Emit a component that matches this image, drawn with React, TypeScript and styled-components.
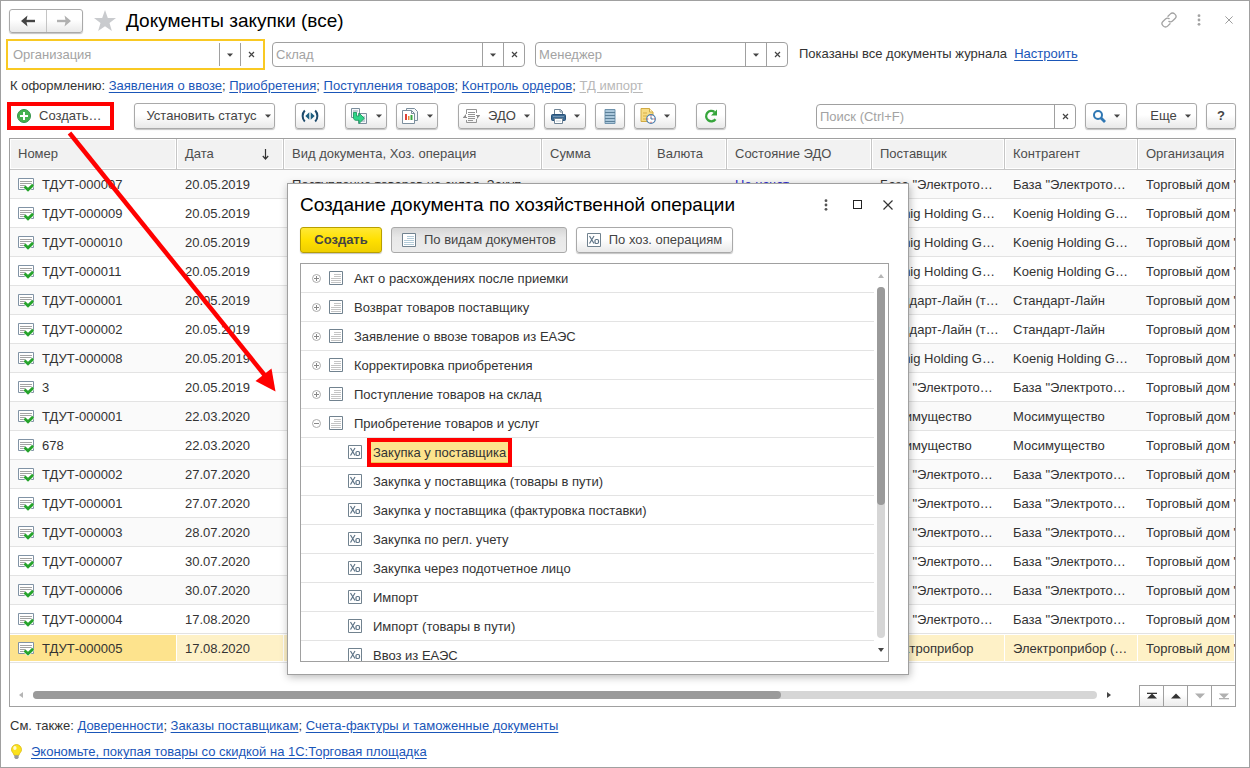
import React from "react";
import styled, { createGlobalStyle, css } from "styled-components";

const GlobalStyle = createGlobalStyle`
  *, *::before, *::after { box-sizing: border-box; }
  body {
    margin: 0;
    background: #fff;
    color: #333;
    font: 13px/16px "Liberation Sans", Arial, sans-serif;
  }
  button, input { font: inherit; color: inherit; }
`;

const Page = styled.main`
  position: relative;
  display: flex;
  flex-direction: column;
  min-height: 100vh;
  padding: 7px 13px 7px 8px;
  border: 1px solid #a0a0a0;
`;

/* ---------- shared controls ---------- */

const raised = css`
  border: 1px solid #a9a9a9;
  border-radius: 3px;
  background: linear-gradient(#fff 0%, #fff 45%, #e9e9e9 100%);
  box-shadow: 0 1px 1px #c4c4c4;
`;

const Button = styled.button<{ $width?: number; $tone?: "yellow" | "pressed"; $menu?: boolean }>`
  ${raised}
  display: inline-flex;
  flex: none;
  align-items: center;
  justify-content: center;
  gap: 8px;
  width: ${(p) => (p.$width ? `${p.$width}px` : "auto")};
  height: 26px;
  padding: ${(p) => (p.$menu ? "0 0 0 8px" : "0")};
  color: #444;
  white-space: nowrap;
  ${(p) =>
    p.$tone === "yellow" &&
    css`
      border-color: #b89f00;
      background: linear-gradient(#ffe836 0%, #ffe000 50%, #efcf00 100%);
      font-weight: bold;
    `}
  ${(p) =>
    p.$tone === "pressed" &&
    css`
      background: linear-gradient(#d6d6d6 0%, #e8e8e8 40%, #ececec 100%);
      box-shadow: none;
    `}
`;

const PlainButton = styled.button`
  display: inline-flex;
  flex: none;
  align-items: center;
  justify-content: center;
  width: 20px;
  height: 20px;
  padding: 0;
  border: 0;
  background: none;
`;

const Link = styled.a<{ $muted?: boolean }>`
  color: ${(p) => (p.$muted ? "#b8b8b8" : "#1a56b8")};
  text-decoration: underline;
  text-underline-offset: 2px;
`;

/* ---------- header ---------- */

const Header = styled.header`
  display: flex;
  align-items: center;
  height: 25px;
`;

const History = styled.div`
  ${raised}
  display: flex;
  width: 74px;
  height: 24px;
`;

const HistoryButton = styled.button`
  display: flex;
  flex: 1;
  align-items: center;
  justify-content: center;
  padding: 0;
  border: 0;
  background: none;
  & + & { border-left: 1px solid #c4c4c4; }
`;

const Favourite = styled(PlainButton)`
  width: 24px;
  height: 24px;
  margin: 0 9px 0 10px;
`;

const Title = styled.h1`
  margin: 0;
  color: #000;
  font-size: 19px;
  font-weight: normal;
  line-height: 24px;
`;

const WindowTools = styled.div`
  display: flex;
  gap: 10px;
  margin-left: auto;
  margin-right: -3px;
  padding-bottom: 2px;
`;

/* ---------- filters ---------- */

const Filters = styled.div`
  display: flex;
  align-items: flex-start;
  gap: 10px;
  height: 26px;
  margin-top: 9px;
  line-height: 24px;
`;

const Field = styled.div<{ $width: number; $focused?: boolean }>`
  display: flex;
  flex: none;
  width: ${(p) => p.$width}px;
  height: 25px;
  border: 1px solid #a0a0a0;
  border-radius: 4px;
  background: #fff;
  ${(p) =>
    p.$focused &&
    css`
      border-color: transparent;
      border-radius: 0;
      outline: 2px solid #f9c923;
      outline-offset: 1px;
    `}
`;

const FieldInput = styled.input`
  flex: 1;
  min-width: 0;
  padding: 0 3px;
  border: 0;
  outline: 0;
  background: none;
  &::placeholder { color: #a3a3a3; opacity: 1; }
`;

const FieldButton = styled.button`
  display: flex;
  flex: none;
  align-items: center;
  justify-content: center;
  width: 21px;
  padding: 0;
  border: 0;
  border-left: 1px solid #a0a0a0;
  background: none;
`;

const FilterNote = styled.span`
  padding-left: 1px;
  white-space: nowrap;
`;

const LinkLine = styled.nav`
  padding-left: 1px;
  white-space: nowrap;
`;

const DueLine = styled(LinkLine)`
  margin-top: 10px;
`;

/* ---------- toolbar ---------- */

const Toolbar = styled.div`
  display: flex;
  gap: 20px;
  margin: 9px 0;
`;

const Group = styled.div<{ $end?: boolean }>`
  display: flex;
  align-items: flex-end;
  gap: 9px;
  margin-left: ${(p) => (p.$end ? "auto" : "0")};
`;

const CreateSlot = styled.div`
  position: relative;
  width: 105px;
  padding-left: 7px;
`;

const CreateButton = styled(Button)`
  width: 94px;
  justify-content: flex-start;
  border-color: transparent;
  background: none;
  box-shadow: none;
`;

const ToolbarMark = styled.span`
  position: absolute;
  inset: -1px 0 -1px -2px;
  border: 4px solid #f00;
  pointer-events: none;
`;

/* ---------- document list ---------- */

const ListPanel = styled.section`
  display: flex;
  flex: 1;
  flex-direction: column;
  border: 1px solid #a0a0a0;
`;

const Table = styled.table`
  width: 100%;
  border-collapse: separate;
  border-spacing: 0;
  table-layout: fixed;
`;

const HeadCell = styled.th`
  height: 31px;
  padding: 0 8px;
  border-right: 1px solid #c6c6c6;
  border-bottom: 1px solid #c6c6c6;
  background: #f2f2f2;
  box-shadow: inset 1px 1px #fff, inset -1px -1px #fff;
  color: #4d4d4d;
  font-weight: normal;
  text-align: left;
  white-space: nowrap;
  &:last-child { border-right: 0; }
`;

const HeadLabel = styled.span`
  display: flex;
  align-items: center;
  justify-content: space-between;
  padding-right: 6px;
`;

const Row = styled.tr<{ $selected: boolean }>`
  background: #fff;
  &:nth-child(odd) { background: #fafafa; }
  && {
    ${(p) => p.$selected && "background: #fef1c7;"}
  }
`;

const Cell = styled.td<{ $selected: boolean; $current?: boolean }>`
  height: 29px;
  padding: 1px 0 0 8px;
  border-bottom: 1px solid #e3e3e3;
  overflow: hidden;
  white-space: nowrap;
  ${(p) => p.$current && "background: #fde38d;"}
  ${(p) => p.$selected && "box-shadow: inset 0 1px #fff, inset -1px -1px #fff;"}
`;

const NumberLabel = styled.span`
  display: flex;
  align-items: center;
  gap: 8px;
`;

const State = styled.span`
  color: #2d2dd0;
`;

const ListFooter = styled.div`
  display: flex;
  align-items: flex-end;
  margin-top: auto;
  padding-left: 4px;
`;

const HScroll = styled.div`
  display: flex;
  flex: 1;
  align-items: center;
  gap: 5px;
  height: 22px;
  margin-right: 23px;
`;

const HTrack = styled.div`
  flex: 1;
  height: 8px;
  border-radius: 4px;
  background: #d6d6d6;
`;

const HThumb = styled.div`
  width: 70.3%;
  height: 8px;
  border-radius: 4px;
  background: #9a9a9a;
`;

const PagerButton = styled.button<{ $active?: boolean }>`
  display: flex;
  align-items: center;
  justify-content: center;
  width: 24px;
  height: 21px;
  padding: 0;
  border: solid #a0a0a0;
  border-width: 1px 0 0 1px;
  background: ${(p) => (p.$active ? "linear-gradient(#fff 40%, #ececec)" : "#fff")};
  color: ${(p) => (p.$active ? "#333" : "#b0b0b0")};
`;

const Footer = styled.footer`
  display: flex;
  flex-direction: column;
  gap: 10px;
  padding-top: 11px;
`;

const Tip = styled.p`
  display: flex;
  align-items: center;
  gap: 7px;
  margin: 0;
`;

/* ---------- creation window ---------- */

const Dialog = styled.section`
  position: absolute;
  top: 182px;
  left: 286px;
  display: flex;
  flex-direction: column;
  width: 622px;
  height: 492px;
  padding: 8px 19px 12px 12px;
  border: 1px solid #a0a0a0;
  background: #fff;
  box-shadow: 1px 2px 8px rgba(0, 0, 0, 0.28);
`;

const DialogHead = styled.div`
  display: flex;
  align-items: center;
  justify-content: space-between;
  height: 26px;
`;

const DialogTitle = styled.h2`
  margin: 0;
  color: #000;
  font-size: 19px;
  font-weight: normal;
  line-height: 26px;
  white-space: nowrap;
`;

const DialogTools = styled.div`
  display: flex;
  gap: 11px;
  margin-right: -9px;
  padding-bottom: 1px;
`;

const DialogBar = styled.div`
  display: flex;
  gap: 9px;
  margin: 9px 0 10px;
`;

const TreePanel = styled.div`
  display: flex;
  flex: 1;
  min-height: 0;
  border: 1px solid #a0a0a0;
`;

const Tree = styled.ul`
  flex: 1;
  margin: 0;
  padding: 0;
  overflow: hidden;
  list-style: none;
`;

const TreeItem = styled.li<{ $child?: boolean }>`
  display: flex;
  align-items: center;
  height: 29px;
  padding-left: ${(p) => (p.$child ? 47 : 10)}px;
  border-bottom: 1px solid #e3e3e3;
  white-space: nowrap;
`;

const Expander = styled(PlainButton)`
  width: 11px;
  height: 11px;
  margin-right: 7px;
`;

const TreeLabel = styled.span<{ $marked?: boolean }>`
  position: relative;
  margin-left: 9px;
  padding: 0 2px;
  line-height: 21px;
  ${(p) =>
    p.$marked &&
    css`
      background: #fde38d;
      box-shadow: inset 0 -1px #f0c64a;
      &::after {
        content: "";
        position: absolute;
        inset: -4px;
        border: 4px solid #f00;
      }
    `}
`;

const VScroll = styled.div`
  display: flex;
  flex-direction: column;
  align-items: center;
  width: 14px;
`;

const VTrack = styled.div`
  flex: 1;
  width: 8px;
  border-radius: 4px;
  background: #d6d6d6;
`;

const VThumb = styled.div`
  height: 62%;
  border-radius: 4px;
  background: #9a9a9a;
`;

const ScrollButton = styled(PlainButton)`
  width: 14px;
  height: 23px;
`;

const Pointer = styled.svg`
  position: absolute;
  top: 129px;
  left: 59px;
  pointer-events: none;
`;

/* ---------- icons ---------- */

const Caret = () => (
  <svg width="6" height="4" viewBox="0 0 6 4"><path d="M0 .5h6L3 3.8z" fill="#444" /></svg>
);

const SmallCross = () => (
  <svg width="7" height="7" viewBox="0 0 7 7"><path d="M1 1l5 5M6 1L1 6" stroke="#444" strokeWidth="1.2" /></svg>
);

const ArrowIcon = ({ color, flip }: { color: string; flip?: boolean }) => (
  <svg width="16" height="12" viewBox="0 0 16 12">
    <path d={flip ? "M1 6h9" : "M15 6H6"} fill="none" stroke={color} strokeWidth="2.400" />
    <path d={flip ? "M8.500.5l6.500 5.500-6.500 5.500 1.200-5.500z" : "M7.500.5L1 6l6.500 5.500L6.300 6z"} fill={color} />
  </svg>
);

const StarIcon = () => (
  <svg width="24" height="24" viewBox="0 0 24 24">
    <path d="M12 1l2.800 7.900 8.200.2-6.500 5 2.400 8L12 17.300 5.100 22.100l2.400-8-6.500-5 8.200-.2z" fill="#c9cbce" />
  </svg>
);

const ChainIcon = () => (
  <svg width="16" height="16" viewBox="0 0 16 16" fill="none" stroke="#a3a3a3" strokeWidth="1.300" strokeLinecap="round">
    <path d="M7 4.300l2.400-2.400a2.900 2.900 0 0 1 4.200 0l.5.5a2.900 2.900 0 0 1 0 4.100L11.500 9a2.900 2.900 0 0 1-3.600.4" />
    <path d="M9 11.700l-2.400 2.400a2.900 2.900 0 0 1-4.200 0l-.5-.5a2.900 2.900 0 0 1 0-4.100L4.500 7a2.900 2.900 0 0 1 3.600-.4" />
  </svg>
);

const DotsIcon = ({ color }: { color: string }) => (
  <svg width="4" height="12" viewBox="0 0 4 12" fill={color}>
    <circle cx="2" cy="1.700" r="1.400" /><circle cx="2" cy="6" r="1.400" /><circle cx="2" cy="10.300" r="1.400" />
  </svg>
);

const CrossIcon = ({ size, color }: { size: number; color: string }) => (
  <svg width={size} height={size} viewBox="0 0 10 10"><path d="M.5.5l9 9M9.500.5l-9 9" stroke={color} strokeWidth="1.200" /></svg>
);

const SquareIcon = () => (
  <svg width="9" height="9" viewBox="0 0 9 9"><rect x=".5" y=".5" width="8" height="8" fill="none" stroke="#222" /></svg>
);

const PlusIcon = () => (
  <svg width="14" height="14" viewBox="0 0 14 14">
    <circle cx="7" cy="7" r="6.500" fill="#45b24f" stroke="#35924a" />
    <path d="M7 3v8M3 7h8" stroke="#fff" strokeWidth="2" />
  </svg>
);

const BroadcastIcon = () => (
  <svg width="18" height="14" viewBox="0 0 18 14" fill="none" stroke="#1d4a6b" strokeWidth="2">
    <path d="M3.800 1.500C.9 4.500.9 9.500 3.800 12.500M14.200 1.500c2.900 3 2.900 8 0 11" />
    <path d="M8.300 3.300v7.400L4.300 7zM9.700 3.300v7.400L13.700 7z" fill="#1d5f80" stroke="none" />
  </svg>
);

const CreateFromIcon = () => (
  <svg width="18" height="17" viewBox="0 0 18 17">
    <path d="M1.500.5h8v9h-8z" fill="#f5f8fa" stroke="#7b8e9d" />
    <path d="M3 3h5M3 5h4" stroke="#8fa3b1" />
    <path d="M8.500 5.500h8v10h-8z" fill="#f5f8fa" stroke="#7b8e9d" />
    <path d="M12 9h3M12 11h3M11 13h4" stroke="#8fa3b1" />
    <path d="M3.500 4.500h3V8H9V5l5.300 5.300L9 15.500v-3.200H6c-1.500 0-2.500-1-2.500-2.500z" fill="#2fd58a" stroke="#1f9b60" strokeWidth=".9" />
  </svg>
);

const ReportsIcon = () => (
  <svg width="17" height="16" viewBox="0 0 17 16">
    <path d="M4.500 3V.5h8l3 3v9h-3" fill="#f5f8fa" stroke="#7b8e9d" />
    <path d="M.5 2.500h9l3 3v10H.5z" fill="#fff" stroke="#7b8e9d" />
    <path d="M9.500 2.500v3h3" fill="none" stroke="#7b8e9d" />
    <path d="M3 6h2v6H3z" fill="#e0403a" /><path d="M6 8h1.500v4H6z" fill="#e8873a" /><path d="M8.500 7h2v5h-2z" fill="#36a840" />
  </svg>
);

const ExchangeIcon = () => (
  <svg width="17" height="14" viewBox="0 0 17 14" fill="none" stroke="#949494">
    <path d="M3.500 5V.5h10V4M13.500 10v3.500h-10V11M5 3.500h7M5 5.500h7M5 7.500h7M5 9.500h7M5 11.500h5" />
    <path d="M0 8.500L3 5v3h1v1H0zM17 6.500L14 10V7h-1V6h4z" fill="#8b8b8b" stroke="none" />
  </svg>
);

const PrinterIcon = () => (
  <svg width="15" height="15" viewBox="0 0 15 15">
    <path d="M3.500 6V.5h6l2 2V6" fill="#fff" stroke="#6f8496" />
    <path d="M9 .5v2.500h2.500" fill="none" stroke="#6f8496" />
    <rect x=".5" y="5.500" width="14" height="6" rx="1" fill="#3d6a92" stroke="#275179" />
    <path d="M2 7.500h11" stroke="#6f93b3" />
    <path d="M3.500 9.500h8v5h-8z" fill="#fff" stroke="#6f8496" />
    <path d="M5 12h5" stroke="#c3d0da" />
  </svg>
);

const RegisterIcon = () => (
  <svg width="12" height="15" viewBox="0 0 12 15">
    <path d="M1 .5h10v14H1z" fill="#a9c6da" stroke="#6f93ad" />
    <path d="M1 3.500h10M1 6.500h10M1 9.500h10M1 12.500h10" stroke="#5b8099" />
  </svg>
);

const TaskIcon = () => (
  <svg width="16" height="16" viewBox="0 0 16 16">
    <path d="M1 .5h8.500L13 4v9.500H1z" fill="#f7dc84" stroke="#d0aa45" />
    <path d="M9.500.5V4H13" fill="#fff3c4" stroke="#d0aa45" />
    <path d="M3 5h4M3 8h4M3 11h3" stroke="#d7ae46" />
    <circle cx="11" cy="11" r="4.300" fill="#fff" stroke="#4d7fae" strokeWidth="1.200" />
    <path d="M11 11V8.500M11 11h2.500" stroke="#416f9c" />
    <path d="M10.500 7.200h1v1h-1zM10.500 13.800h1v1h-1zM7.300 10.500h1v1h-1zM13.800 10.500h1v1h-1z" fill="#e0392e" />
  </svg>
);

const RefreshIcon = () => (
  <svg width="14" height="14" viewBox="0 0 14 14">
    <path d="M11.500 10.200A5.200 5.200 0 1 1 10.500 3" fill="none" stroke="#36a53b" strokeWidth="2.300" />
    <path d="M13 .5v6H7z" fill="#36a53b" />
  </svg>
);

const LensIcon = () => (
  <svg width="13" height="13" viewBox="0 0 13 13" fill="none" stroke="#2f77b3">
    <circle cx="5" cy="5" r="4" strokeWidth="2" />
    <path d="M8 8l4 4" strokeWidth="2.800" />
  </svg>
);

const SortIcon = () => (
  <svg width="7" height="11" viewBox="0 0 7 11"><path d="M3.500 0v10M.8 7l2.700 3 2.700-3" fill="none" stroke="#333" strokeWidth="1.200" /></svg>
);

const PostedIcon = () => (
  <svg width="16" height="14" viewBox="0 0 16 14">
    <path d="M.5.500h15v11H.5z" fill="#fff" stroke="#8193a5" />
    <path d="M2 3.500h12M2 5.500h12M2 7.500h6M2 9.500h4" stroke="#a3a3a3" />
    <path d="M6.500 8.500l3.500 3.300 5.200-5" fill="none" stroke="#fff" strokeWidth="4" />
    <path d="M6.500 8.500l3.500 3.300 5.200-5" fill="none" stroke="#26a32c" strokeWidth="2.900" />
  </svg>
);

const DocIcon = ({ tinted }: { tinted?: boolean }) => (
  <svg width="14" height="14" viewBox="0 0 14 14">
    <path d="M.5.5h13v13H.5z" fill="#fff" stroke="#71828f" />
    <path d="M5 3.500h7M5 5.500h7M2 7.500h10M2 9.500h10M2 11.500h10" stroke={tinted ? "#b3cbd8" : "#c4c4c4"} />
  </svg>
);

const OperationIcon = () => (
  <svg width="14" height="14" viewBox="0 0 14 14" fill="none" stroke="#5f7588">
    <path d="M.5.5h13v13H.5z" fill="#fff" stroke="#71828f" />
    <path d="M2.500 3l4.500 7.500M7 3l-4.500 7.500" strokeWidth="1.200" />
    <rect x="8" y="6.500" width="3.500" height="4" rx="1.200" strokeWidth="1.200" />
  </svg>
);

const ToggleIcon = ({ open }: { open?: boolean }) => (
  <svg width="9" height="9" viewBox="0 0 9 9" fill="none" stroke="#aaa">
    <circle cx="4.500" cy="4.500" r="4" /><path d={open ? "M2 4.500h5" : "M2 4.500h5M4.500 2v5"} stroke="#888" />
  </svg>
);

const Triangle = ({ dir, color }: { dir: "up" | "down" | "left" | "right"; color: string }) => {
  const d = { up: "M0 5l3-4 3 4z", down: "M0 1h6L3 5z", left: "M5 0v6L1 3z", right: "M1 0v6l4-3z" }[dir];
  return <svg width="6" height="6" viewBox="0 0 6 6"><path d={d} fill={color} /></svg>;
};

const PagerIcon = ({ down, edge }: { down?: boolean; edge?: boolean }) => (
  <svg width="10" height="8" viewBox="0 0 10 8" fill="currentColor">
    {down ? <path d="M0 1.500h10L5 6.500z" /> : <path d="M0 6.500h10L5 1.500z" />}
    {edge && <path d={down ? "M0 6h10v1.300H0z" : "M0 .7h10V2H0z"} />}
  </svg>
);

const BulbIcon = () => (
  <svg width="15" height="16" viewBox="0 0 15 17">
    <path d="M7.500.5a5.500 5.500 0 0 0-5.300 5.600c0 2.600 2.300 3.400 2.800 6h5c.5-2.600 2.800-3.400 2.800-6A5.500 5.500 0 0 0 7.500.5z" fill="#fbe21c" stroke="#d8b400" strokeWidth=".8" />
    <ellipse cx="5.800" cy="4.300" rx="1.800" ry="2.200" fill="#fffbd0" />
    <path d="M5.200 12h4.600v2.600L8.500 16h-2l-1.300-1.400z" fill="#9a9a9a" />
  </svg>
);

/* ---------- data ---------- */

const base = 'База "Электрото…';
const koenig = "Koenig Holding G…";

type Doc = [number: string, date: string, supplier: string, contractor: string];

const docs: Doc[] = [
  ["ТДУТ-000007", "20.05.2019", base, base],
  ["ТДУТ-000009", "20.05.2019", koenig, koenig],
  ["ТДУТ-000010", "20.05.2019", koenig, koenig],
  ["ТДУТ-000011", "20.05.2019", koenig, koenig],
  ["ТДУТ-000001", "20.05.2019", "Стандарт-Лайн (т…", "Стандарт-Лайн"],
  ["ТДУТ-000002", "20.05.2019", "Стандарт-Лайн (т…", "Стандарт-Лайн"],
  ["ТДУТ-000008", "20.05.2019", koenig, koenig],
  ["3", "20.05.2019", base, base],
  ["ТДУТ-000001", "22.03.2020", "Мосимущество", "Мосимущество"],
  ["678", "22.03.2020", "Мосимущество", "Мосимущество"],
  ["ТДУТ-000002", "27.07.2020", base, base],
  ["ТДУТ-000001", "27.07.2020", base, base],
  ["ТДУТ-000003", "28.07.2020", base, base],
  ["ТДУТ-000007", "30.07.2020", base, base],
  ["ТДУТ-000006", "30.07.2020", base, base],
  ["ТДУТ-000004", "17.08.2020", base, base],
  ["ТДУТ-000005", "17.08.2020", "Электроприбор", "Электроприбор (…"],
];

const columnWidths = [167, 107, 258, 107, 78, 145, 133, 133];

const groups = [
  "Акт о расхождениях после приемки",
  "Возврат товаров поставщику",
  "Заявление о ввозе товаров из ЕАЭС",
  "Корректировка приобретения",
  "Поступление товаров на склад",
  "Приобретение товаров и услуг",
];

const operations = [
  "Закупка у поставщика",
  "Закупка у поставщика (товары в пути)",
  "Закупка у поставщика (фактуровка поставки)",
  "Закупка по регл. учету",
  "Закупка через подотчетное лицо",
  "Импорт",
  "Импорт (товары в пути)",
  "Ввоз из ЕАЭС",
];

/* ---------- view ---------- */

const FilterField = ({ name, focused }: { name: string; focused?: boolean }) => (
  <Field $width={253} $focused={focused}>
    <FieldInput placeholder={name} aria-label={name} />
    <FieldButton aria-label="Выбрать"><Caret /></FieldButton>
    <FieldButton aria-label="Очистить"><SmallCross /></FieldButton>
  </Field>
);

export default function App() {
  return (
    <Page>
      <GlobalStyle />
      <Header>
        <History>
          <HistoryButton aria-label="Назад"><ArrowIcon color="#444" /></HistoryButton>
          <HistoryButton aria-label="Вперед"><ArrowIcon color="#b0b0b0" flip /></HistoryButton>
        </History>
        <Favourite aria-label="В избранное"><StarIcon /></Favourite>
        <Title>Документы закупки (все)</Title>
        <WindowTools>
          <PlainButton aria-label="Ссылка"><ChainIcon /></PlainButton>
          <PlainButton aria-label="Меню"><DotsIcon color="#a3a3a3" /></PlainButton>
          <PlainButton aria-label="Закрыть"><CrossIcon size={8} color="#999" /></PlainButton>
        </WindowTools>
      </Header>

      <Filters>
        <FilterField name="Организация" focused />
        <FilterField name="Склад" />
        <FilterField name="Менеджер" />
        <FilterNote>Показаны все документы журнала&nbsp; <Link href="#setup">Настроить</Link></FilterNote>
      </Filters>

      <DueLine>
        К оформлению: <Link href="#import">Заявления о ввозе</Link>; <Link href="#purchases">Приобретения</Link>;{" "}
        <Link href="#receipts">Поступления товаров</Link>; <Link href="#control">Контроль ордеров</Link>;{" "}
        <Link href="#customs" $muted>ТД импорт</Link>
      </DueLine>

      <Toolbar>
        <CreateSlot>
          <CreateButton><PlusIcon />Создать…</CreateButton>
          <ToolbarMark />
        </CreateSlot>
        <Button $width={141} $menu>Установить статус <Caret /></Button>
        <Button $width={30} aria-label="Оповещения"><BroadcastIcon /></Button>
        <Group>
          <Button $width={42} aria-label="Создать на основании"><CreateFromIcon /><Caret /></Button>
          <Button $width={42} aria-label="Отчеты"><ReportsIcon /><Caret /></Button>
        </Group>
        <Group>
          <Button $width={77}><ExchangeIcon />ЭДО<Caret /></Button>
          <Button $width={42} aria-label="Печать"><PrinterIcon /><Caret /></Button>
          <Button $width={30} aria-label="Реестр"><RegisterIcon /></Button>
          <Button $width={42} aria-label="Задачи"><TaskIcon /><Caret /></Button>
        </Group>
        <Button $width={30} aria-label="Обновить"><RefreshIcon /></Button>
        <Group $end>
          <Field $width={260}>
            <FieldInput placeholder="Поиск (Ctrl+F)" aria-label="Поиск" />
            <FieldButton aria-label="Очистить"><SmallCross /></FieldButton>
          </Field>
          <Button $width={42} aria-label="Найти"><LensIcon /><Caret /></Button>
          <Button $width={61} $menu>Еще<Caret /></Button>
          <Button $width={30}><b>?</b></Button>
        </Group>
      </Toolbar>

      <ListPanel>
        <Table>
          <colgroup>
            {columnWidths.map((width, i) => <col key={i} width={width} />)}
            <col />
          </colgroup>
          <thead>
            <tr>
              <HeadCell>Номер</HeadCell>
              <HeadCell><HeadLabel>Дата <SortIcon /></HeadLabel></HeadCell>
              <HeadCell>Вид документа, Хоз. операция</HeadCell>
              <HeadCell>Сумма</HeadCell>
              <HeadCell>Валюта</HeadCell>
              <HeadCell>Состояние ЭДО</HeadCell>
              <HeadCell>Поставщик</HeadCell>
              <HeadCell>Контрагент</HeadCell>
              <HeadCell>Организация</HeadCell>
            </tr>
          </thead>
          <tbody>
            {docs.map(([number, date, supplier, contractor], i) => {
              const selected = i === docs.length - 1;
              return (
                <Row key={i} $selected={selected}>
                  <Cell $selected={selected} $current={selected}><NumberLabel><PostedIcon />{number}</NumberLabel></Cell>
                  <Cell $selected={selected}>{date}</Cell>
                  <Cell $selected={selected}>{i === 0 && "Поступление товаров на склад, Закуп…"}</Cell>
                  <Cell $selected={selected} />
                  <Cell $selected={selected} />
                  <Cell $selected={selected}>{i === 0 && <State>Не начат</State>}</Cell>
                  <Cell $selected={selected}>{supplier}</Cell>
                  <Cell $selected={selected}>{contractor}</Cell>
                  <Cell $selected={selected}>Торговый дом "</Cell>
                </Row>
              );
            })}
          </tbody>
        </Table>
        <ListFooter>
          <HScroll>
            <ScrollButton aria-label="Влево"><Triangle dir="left" color="#b5b5b5" /></ScrollButton>
            <HTrack><HThumb /></HTrack>
            <ScrollButton aria-label="Вправо"><Triangle dir="right" color="#444" /></ScrollButton>
          </HScroll>
          <PagerButton $active aria-label="В начало"><PagerIcon edge /></PagerButton>
          <PagerButton $active aria-label="Выше"><PagerIcon /></PagerButton>
          <PagerButton aria-label="Ниже"><PagerIcon down /></PagerButton>
          <PagerButton aria-label="В конец"><PagerIcon down edge /></PagerButton>
        </ListFooter>
      </ListPanel>

      <Footer>
        <LinkLine>
          См. также: <Link href="#proxies">Доверенности</Link>; <Link href="#orders">Заказы поставщикам</Link>;{" "}
          <Link href="#invoices">Счета-фактуры и таможенные документы</Link>
        </LinkLine>
        <Tip>
          <BulbIcon />
          <Link href="#market">Экономьте, покупая товары со скидкой на 1С:Торговая площадка</Link>
        </Tip>
      </Footer>

      <Pointer width="220" height="265" viewBox="0 0 220 265" aria-hidden="true">
        <path d="M9.500 3l195 242" stroke="#f00" strokeWidth="4.500" />
        <path d="M215.500 261.500l-20-10.500 16-12.500z" fill="#f00" />
      </Pointer>

      <Dialog aria-labelledby="creation-title">
        <DialogHead>
          <DialogTitle id="creation-title">Создание документа по хозяйственной операции</DialogTitle>
          <DialogTools>
            <PlainButton aria-label="Меню"><DotsIcon color="#555" /></PlainButton>
            <PlainButton aria-label="Развернуть"><SquareIcon /></PlainButton>
            <PlainButton aria-label="Закрыть"><CrossIcon size={10} color="#333" /></PlainButton>
          </DialogTools>
        </DialogHead>
        <DialogBar>
          <Button $width={82} $tone="yellow">Создать</Button>
          <Button $width={176} $tone="pressed"><DocIcon tinted />По видам документов</Button>
          <Button $width={157}><OperationIcon />По хоз. операциям</Button>
        </DialogBar>
        <TreePanel>
          <Tree>
            {groups.map((name, i) => (
              <TreeItem key={name}>
                <Expander aria-label={name}><ToggleIcon open={i === groups.length - 1} /></Expander>
                <DocIcon />
                <TreeLabel>{name}</TreeLabel>
              </TreeItem>
            ))}
            {operations.map((name, i) => (
              <TreeItem key={name} $child>
                <OperationIcon />
                <TreeLabel $marked={i === 0}>{name}</TreeLabel>
              </TreeItem>
            ))}
          </Tree>
          <VScroll>
            <ScrollButton aria-label="Вверх"><Triangle dir="up" color="#b5b5b5" /></ScrollButton>
            <VTrack><VThumb /></VTrack>
            <ScrollButton aria-label="Вниз"><Triangle dir="down" color="#444" /></ScrollButton>
          </VScroll>
        </TreePanel>
      </Dialog>
    </Page>
  );
}
